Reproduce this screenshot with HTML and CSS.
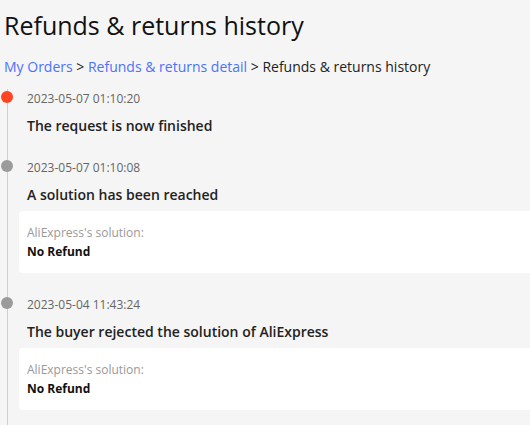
FILE: index.html
```html
<!DOCTYPE html>
<html>
<head>
<meta charset="utf-8">
<link rel="stylesheet" href="styles.css">
</head>
<body>
<div class="page">
  <h1 class="title">Refunds &amp; returns history</h1>
  <div class="crumbs">
    <a class="crumb-link" href="#">My Orders</a> &gt; <a class="crumb-link" href="#">Refunds &amp; returns detail</a> &gt; Refunds &amp; returns history
  </div>
  <div class="timeline">
    <div class="item">
      <span class="dot dot-active"></span>
      <div class="time">2023-05-07 01:10:20</div>
      <div class="event">The request is now finished</div>
    </div>
    <div class="item">
      <span class="dot"></span>
      <div class="time">2023-05-07 01:10:08</div>
      <div class="event">A solution has been reached</div>
      <div class="card">
        <div class="card-label">AliExpress's solution:</div>
        <div class="card-value">No Refund</div>
      </div>
    </div>
    <div class="item">
      <span class="dot"></span>
      <div class="time">2023-05-04 11:43:24</div>
      <div class="event">The buyer rejected the solution of AliExpress</div>
      <div class="card">
        <div class="card-label">AliExpress's solution:</div>
        <div class="card-value">No Refund</div>
      </div>
    </div>
  </div>
</div>
</body>
</html>
```
FILE: styles.css
```css
html, body {
  margin: 0;
  padding: 0;
  background: #f5f5f5;
  font-family: "Open Sans", "Liberation Sans", sans-serif;
  color: #222;
  overflow: hidden;
}
.page {
  width: 530px;
  height: 425px;
  overflow: hidden;
}
.title {
  margin: 9px 0 0 4px;
  font-size: 25px;
  line-height: 32px;
  font-weight: 400;
  color: #111;
}
.crumbs {
  margin: 16px 0 0 4px;
  font-size: 14px;
  line-height: 20px;
  color: #222;
}
.crumb-link {
  color: #4c72ff;
  text-decoration: none;
}
.timeline {
  margin: 12px 0 0 7px;
  border-left: 1px solid #cfcfcf;
  height: 400px;
}
.item {
  position: relative;
  padding: 0 0 22px 19px;
}
.dot {
  position: absolute;
  left: -7px;
  top: 2px;
  width: 12px;
  height: 12px;
  border-radius: 50%;
  background: #9b9b9b;
}
.dot-active {
  background: #ff4422;
}
.time {
  font-size: 12px;
  line-height: 20px;
  color: #666;
}
.event {
  margin-top: 7px;
  font-size: 14px;
  line-height: 20px;
  font-weight: 600;
  color: #222;
}
.card {
  margin: 6px 0 0 -8px;
  padding: 12px 8px;
  background: #fff;
  border-radius: 4px 0 0 4px;
}
.card-label {
  font-size: 12px;
  line-height: 19px;
  color: #999;
}
.card-value {
  font-size: 12px;
  line-height: 19px;
  font-weight: 700;
  color: #111;
}
```
